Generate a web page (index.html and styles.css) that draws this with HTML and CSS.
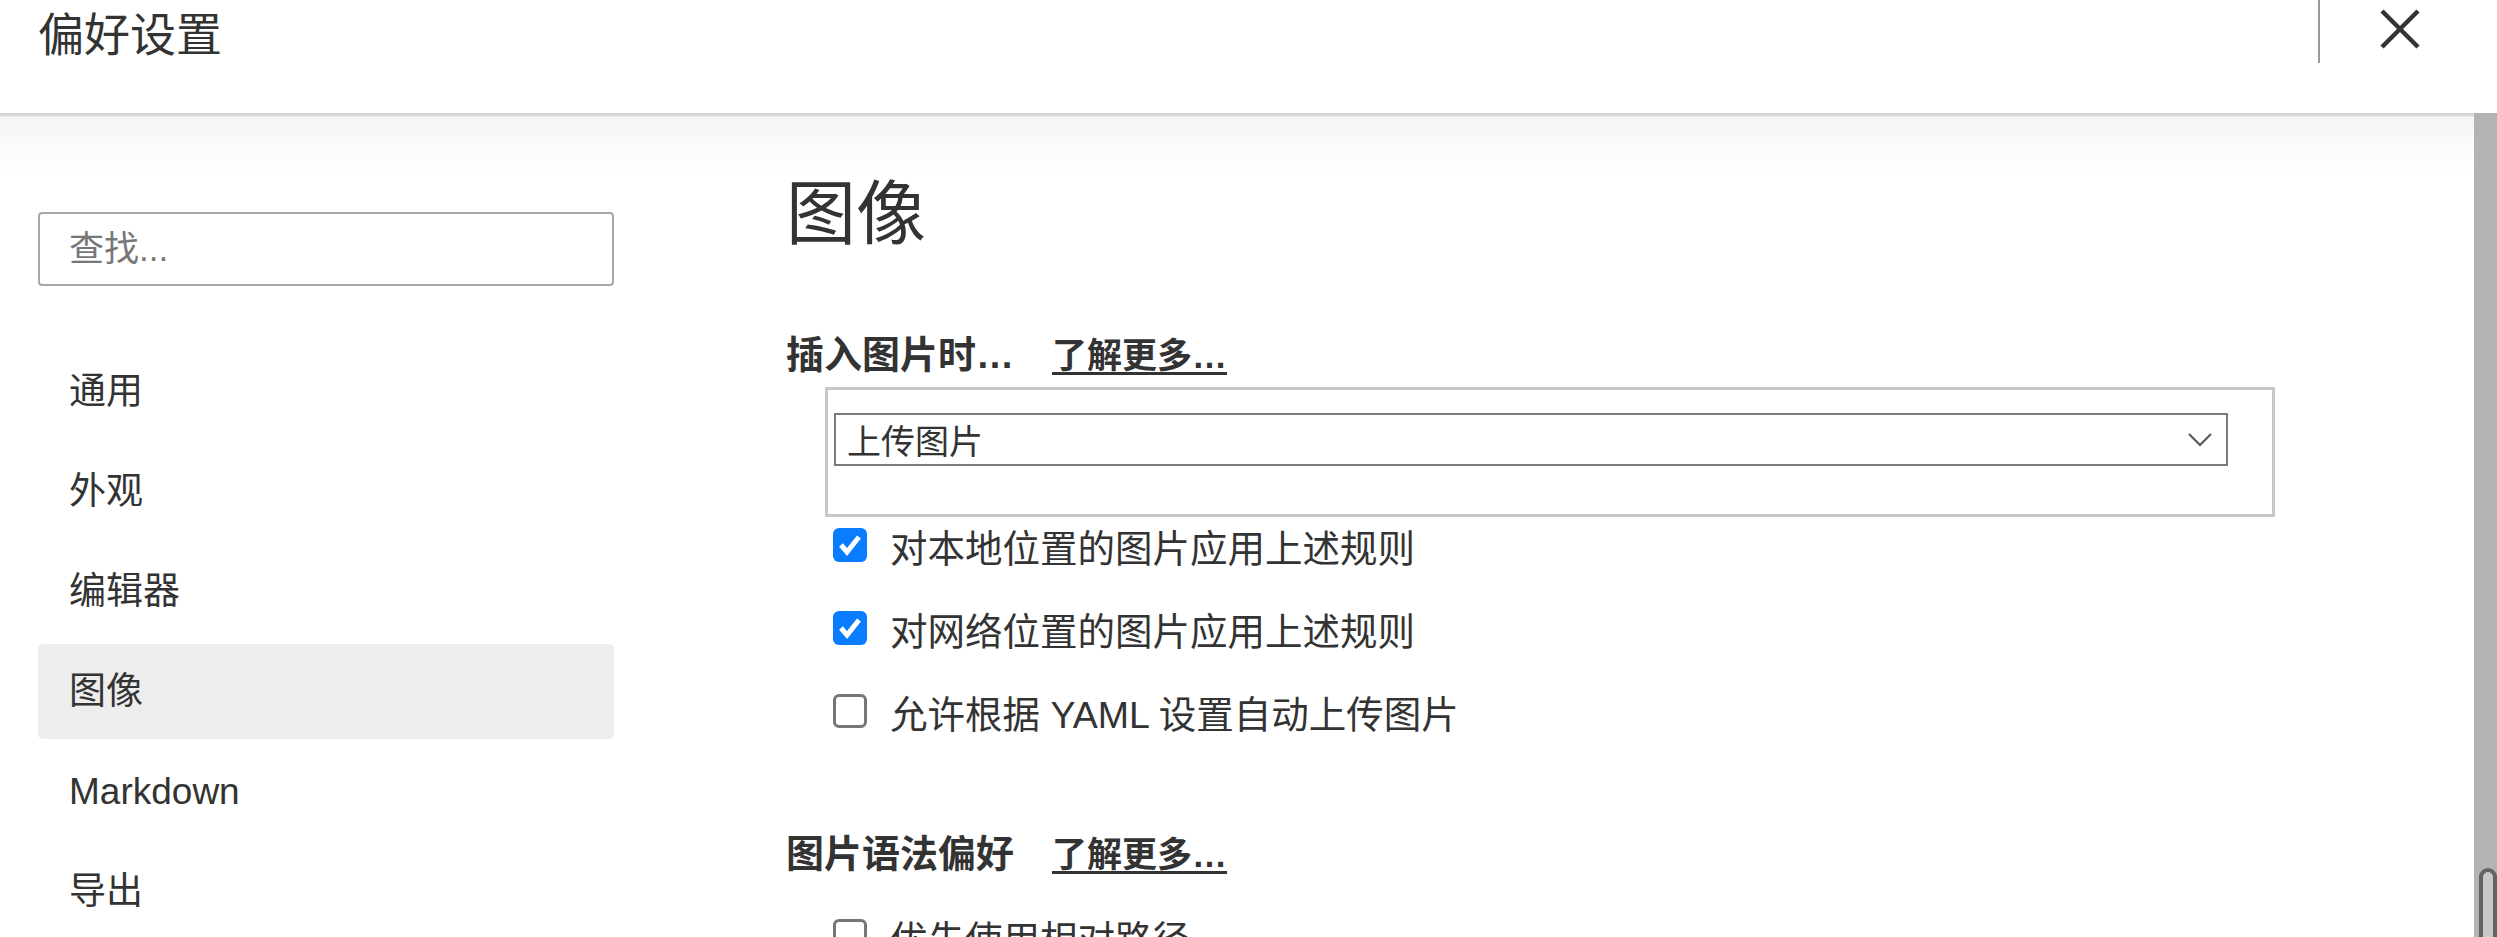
FILE: index.html
```html
<!DOCTYPE html>
<html lang="zh-CN">
<head>
  <meta charset="UTF-8">
  <title>偏好设置</title>
  <link rel="stylesheet" href="styles.css">
</head>
<body>

  <header class="topbar">
    <h1 class="topbar-title">偏好设置</h1>
    <div class="topbar-divider"></div>
    <button class="close-btn" aria-label="关闭">
      <svg width="40" height="40" viewBox="0 0 40 40">
        <path d="M2 2 L38 38 M38 2 L2 38" stroke="#333" stroke-width="4.5" fill="none"/>
      </svg>
    </button>
  </header>

  <div class="main">
    <aside class="sidebar">
      <input class="search" type="text" placeholder="查找...">
      <nav class="nav">
        <div class="nav-item">通用</div>
        <div class="nav-item">外观</div>
        <div class="nav-item">编辑器</div>
        <div class="nav-item active">图像</div>
        <div class="nav-item">Markdown</div>
        <div class="nav-item">导出</div>
      </nav>
    </aside>

    <section class="content">
      <h2 class="page-title">图像</h2>

      <div class="group-title">
        <span>插入图片时…</span>
        <a class="learn-more" href="#">了解更多…</a>
      </div>

      <div class="select-wrap">
        <div class="select">
          <span>上传图片</span>
          <svg width="24" height="14" viewBox="0 0 24 14">
            <path d="M1 1 L12 12 L23 1" stroke="#555" stroke-width="2" fill="none"/>
          </svg>
        </div>
      </div>

      <label class="check-row">
        <span class="box checked">
          <svg width="34" height="34" viewBox="0 0 34 34"><path d="M8 17 L14 24 L26 9" stroke="#fff" stroke-width="5" fill="none"/></svg>
        </span>
        对本地位置的图片应用上述规则
      </label>
      <label class="check-row">
        <span class="box checked">
          <svg width="34" height="34" viewBox="0 0 34 34"><path d="M8 17 L14 24 L26 9" stroke="#fff" stroke-width="5" fill="none"/></svg>
        </span>
        对网络位置的图片应用上述规则
      </label>
      <label class="check-row">
        <span class="box"></span>
        允许根据 YAML 设置自动上传图片
      </label>

      <div class="group-title second">
        <span>图片语法偏好</span>
        <a class="learn-more" href="#">了解更多…</a>
      </div>

      <label class="check-row last">
        <span class="box"></span>
        优先使用相对路径
      </label>
    </section>

    <div class="scrollbar">
      <div class="scroll-thumb"></div>
    </div>
  </div>

</body>
</html>
```

FILE: styles.css
```css
body {
  margin: 0;
  height: 937px;
  overflow: hidden;
  font-family: 'Liberation Sans', 'Noto Sans CJK SC', sans-serif;
  color: #333;
  background: #fff;
}

.topbar {
  display: flex;
  align-items: flex-start;
  height: 113px;
  background: #fff;
}

.topbar-title {
  flex: 1;
  margin: 0;
  padding-left: 38px;
  font-size: 46px;
  font-weight: normal;
  line-height: 70px;
}

.topbar-divider {
  width: 2px;
  height: 63px;
  background: #9a9a9a;
}

.close-btn {
  margin: 9px 77px 0 60px;
  padding: 0;
  width: 40px;
  height: 40px;
  border: none;
  background: none;
}

.close-btn svg {
  display: block;
}

.main {
  display: flex;
  height: 824px;
  background: linear-gradient(#d2d2d2 0, #dcdcdc 3px, #f5f5f5 4px, #fff 60px);
}

/* sidebar */
.sidebar {
  flex-shrink: 0;
  width: 576px;
  padding: 99px 0 0 38px;
}

.search {
  display: block;
  box-sizing: border-box;
  width: 100%;
  height: 74px;
  padding: 0 0 0 29px;
  border: 2px solid #a8a8a8;
  border-radius: 4px;
  font-family: inherit;
  font-size: 35px;
  color: #333;
  background: #fff;
  outline: none;
}

.search::placeholder {
  color: #777;
}

.nav {
  margin-top: 58px;
}

.nav-item {
  height: 95px;
  margin-bottom: 5px;
  padding-left: 31px;
  border-radius: 5px;
  font-size: 37px;
  line-height: 95px;
}

.nav-item.active {
  background: #ededed;
}

/* content */
.content {
  flex: 1;
  padding: 57px 0 0 172px;
}

.page-title {
  margin: 0;
  font-size: 70px;
  font-weight: normal;
  line-height: 90px;
}

.group-title {
  display: flex;
  align-items: baseline;
  gap: 38px;
  margin-top: 70px;
  font-size: 38px;
  font-weight: bold;
  line-height: 50px;
}

.group-title.second {
  margin-top: 90px;
}

.learn-more {
  font-size: 35px;
  color: #333;
  text-decoration: underline;
  text-decoration-thickness: 3px;
  text-underline-offset: 4px;
}

.select-wrap {
  width: 1394px;
  margin: 6px 0 0 39px;
  padding: 23px 44px 48px 6px;
  border: 3px solid #c8c8c8;
}

.select {
  display: flex;
  align-items: center;
  justify-content: space-between;
  box-sizing: border-box;
  height: 53px;
  padding: 0 14px 0 11px;
  border: 2px solid #7a7a7a;
  font-size: 34px;
  background: #fff;
}

.select svg {
  display: block;
}

.check-row {
  display: flex;
  align-items: center;
  gap: 23px;
  height: 56px;
  margin: 27px 0 0 47px;
  font-size: 37.5px;
}

.select-wrap + .check-row {
  margin-top: 0;
}

.check-row.last {
  margin-top: 28px;
}

.box {
  flex-shrink: 0;
  box-sizing: border-box;
  width: 34px;
  height: 34px;
  border: 3px solid #767676;
  border-radius: 6px;
  background: #fff;
}

.box.checked {
  border: none;
  background: #0a7cff;
}

.box svg {
  display: block;
}

/* fake scrollbar */
.scrollbar {
  position: relative;
  flex-shrink: 0;
  width: 23px;
  background: #b3b3b3;
}

.scroll-thumb {
  position: absolute;
  top: 755px;
  right: 0;
  box-sizing: border-box;
  width: 18px;
  height: 80px;
  border: 4px solid #626262;
  border-radius: 9px 9px 0 0;
  background: #c8c8c8;
}
```
